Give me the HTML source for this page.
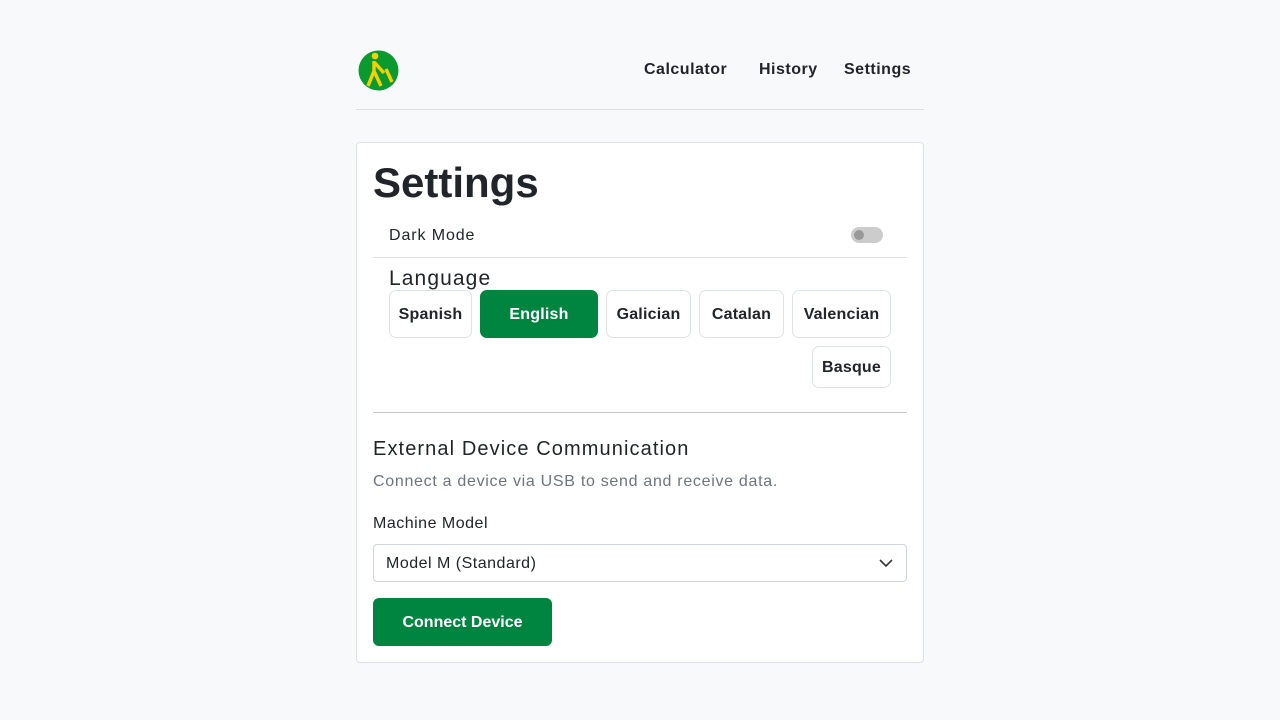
<!DOCTYPE html>
<html><head><style>
*{box-sizing:border-box;margin:0;padding:0}
body{width:1280px;height:720px;background:#f8f9fa;font-family:"Liberation Sans",sans-serif;color:#212529;position:relative;overflow:hidden}
.a{position:absolute;white-space:nowrap}
.nav{font-size:16px;font-weight:bold;top:61px;color:#212529;letter-spacing:0.5px}
.card{left:356px;top:142px;width:568px;height:521px;background:#fff;border:1px solid #dee2e6;border-radius:4px}
.lb{top:290px;height:48px;border:1px solid #dee2e6;border-radius:7px;background:#fff;font-weight:bold;font-size:16px;display:flex;align-items:center;justify-content:center;color:#212529;letter-spacing:0.2px;padding-top:2px}
</style></head><body>
<svg class="a" style="left:358px;top:50px" width="41" height="41" viewBox="0 0 41 41">
<circle cx="20.5" cy="20.5" r="20" fill="#0a9a2e"/>
<circle cx="17" cy="6" r="3.3" fill="#f7d000"/>
<path d="M16 11 L16 21 L10 36 M16 21 L23 36 M17 13 L26 23 M28 19 L34 32" stroke="#f7d000" stroke-width="3.4" fill="none" stroke-linecap="butt"/>
</svg>
<div class="a nav" style="left:644px">Calculator</div>
<div class="a nav" style="left:759px">History</div>
<div class="a nav" style="left:844px">Settings</div>
<div class="a" style="left:356px;top:109px;width:568px;height:1px;background:#dee2e6"></div>
<div class="a card"></div>
<div class="a" style="left:373px;top:159px;font-size:42px;font-weight:bold">Settings</div>
<div class="a" style="left:389px;top:227px;font-size:16px;letter-spacing:0.9px">Dark Mode</div>
<div class="a" style="left:851px;top:227px;width:32px;height:16px;border-radius:8px;background:#ccc"></div>
<div class="a" style="left:854px;top:230px;width:10px;height:10px;border-radius:5px;background:#999"></div>
<div class="a" style="left:373px;top:257px;width:534px;height:1px;background:#dee2e6"></div>
<div class="a" style="left:389px;top:267px;font-size:21px;letter-spacing:1.1px">Language</div>
<div class="a lb" style="left:389px;width:83px">Spanish</div>
<div class="a lb" style="left:480px;width:118px;background:#008540;border-color:#008540;color:#fff">English</div>
<div class="a lb" style="left:606px;width:85px">Galician</div>
<div class="a lb" style="left:699px;width:85px">Catalan</div>
<div class="a lb" style="left:792px;width:99px">Valencian</div>
<div class="a lb" style="left:812px;top:346px;height:42px;width:79px">Basque</div>
<div class="a" style="left:373px;top:412px;width:534px;height:1px;background:#c8c8c8"></div>
<div class="a" style="left:373px;top:438px;font-size:20px;letter-spacing:1.1px">External Device Communication</div>
<div class="a" style="left:373px;top:473px;font-size:16px;color:#6c757d;letter-spacing:0.7px">Connect a device via USB to send and receive data.</div>
<div class="a" style="left:373px;top:515px;font-size:16px;letter-spacing:0.5px">Machine Model</div>
<div class="a" style="left:373px;top:544px;width:534px;height:38px;border:1px solid #ced4da;border-radius:4px;padding:10px 12px;font-size:16px;letter-spacing:0.5px">Model M (Standard)</div>
<svg class="a" style="left:879px;top:558px" width="14" height="10"><path d="M1 2 L7 8 L13 2" stroke="#333" stroke-width="1.6" fill="none"/></svg>
<div class="a" style="left:373px;top:598px;width:179px;height:48px;background:#008540;border-radius:6px;color:#fff;font-weight:bold;font-size:16px;display:flex;align-items:center;justify-content:center;padding-top:2px">Connect Device</div>
</body></html>
